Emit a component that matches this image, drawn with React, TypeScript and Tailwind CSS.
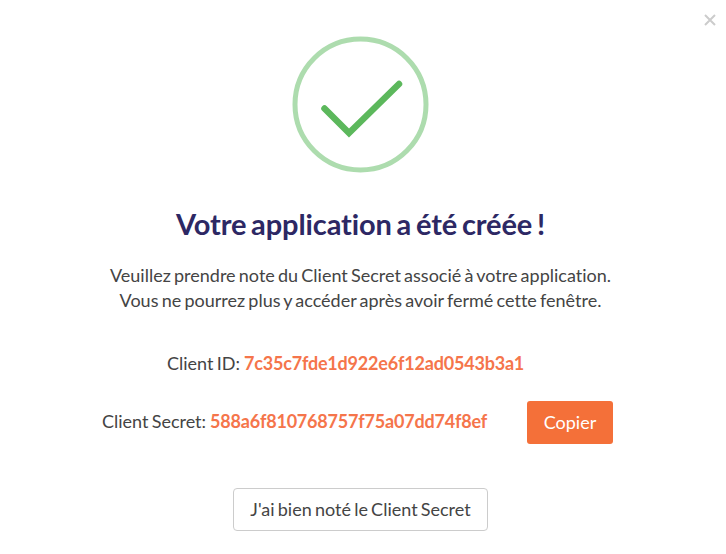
import React from "react";

export default function App() {
  return (
    <main className="relative flex h-[554px] w-[726px] flex-col items-center overflow-hidden bg-white font-['Lato',sans-serif] text-[18px] text-[#444444] [font-variant-ligatures:none] [word-spacing:-1.4px]">
      <button aria-label="Fermer" className="absolute top-[14px] right-[10px] h-3 w-3">
        <svg viewBox="0 0 12 12" className="h-3 w-3" fill="none" stroke="#cccccc" strokeWidth="2">
          <path d="M1 1L11 11M11 1L1 11" />
        </svg>
      </button>
      <svg viewBox="0 0 136 136" className="mt-[37px] mr-[5px] h-[136px] w-[136px] shrink-0 overflow-visible" fill="none">
        <circle cx="67.5" cy="67.5" r="65.5" stroke="#addcae" strokeWidth="5" />
        <path d="M31.500 71.500L56 96L106 47" stroke="#5cb85c" strokeWidth="6.500" strokeLinecap="round" />
      </svg>
      <h1 className="mt-[33px] mr-[5px] text-[29px] leading-[36px] font-bold tracking-[-0.1px] whitespace-nowrap text-[#2d2864] [word-spacing:-2.2px]">Votre application a été créée !</h1>
      <p className="mt-[21px] mr-[5px] text-center leading-[25px] whitespace-nowrap">
        Veuillez prendre note du Client Secret associé à votre application.
        <br />
        Vous ne pourrez plus y accéder après avoir fermé cette fenêtre.
      </p>
      <div className="mt-[38px] flex w-full pl-[167px] leading-[25px] whitespace-pre">
        <span className="w-[77px]">Client ID:</span>
        <strong className="tracking-[-0.2px] text-[#f5754b]">7c35c7fde1d922e6f12ad0543b3a1</strong>
      </div>
      <div className="mt-[25px] flex h-[43px] w-full items-center pl-[102px] whitespace-pre">
        <span className="-mt-0.5 w-[108px]">Client Secret:</span>
        <strong className="-mt-0.5 w-[317px] tracking-[-0.2px] text-[#f5754b]">588a6f810768757f75a07dd74f8ef</strong>
        <button className="h-[43px] w-[86px] rounded-[3px] bg-[#f47039] text-white">Copier</button>
      </div>
      <button className="mt-[44px] mr-[5px] h-[43px] w-[255px] rounded-[4px] border border-[#cccccc] whitespace-nowrap [word-spacing:-1.4px]">J'ai bien noté le Client Secret</button>
    </main>
  );
}
